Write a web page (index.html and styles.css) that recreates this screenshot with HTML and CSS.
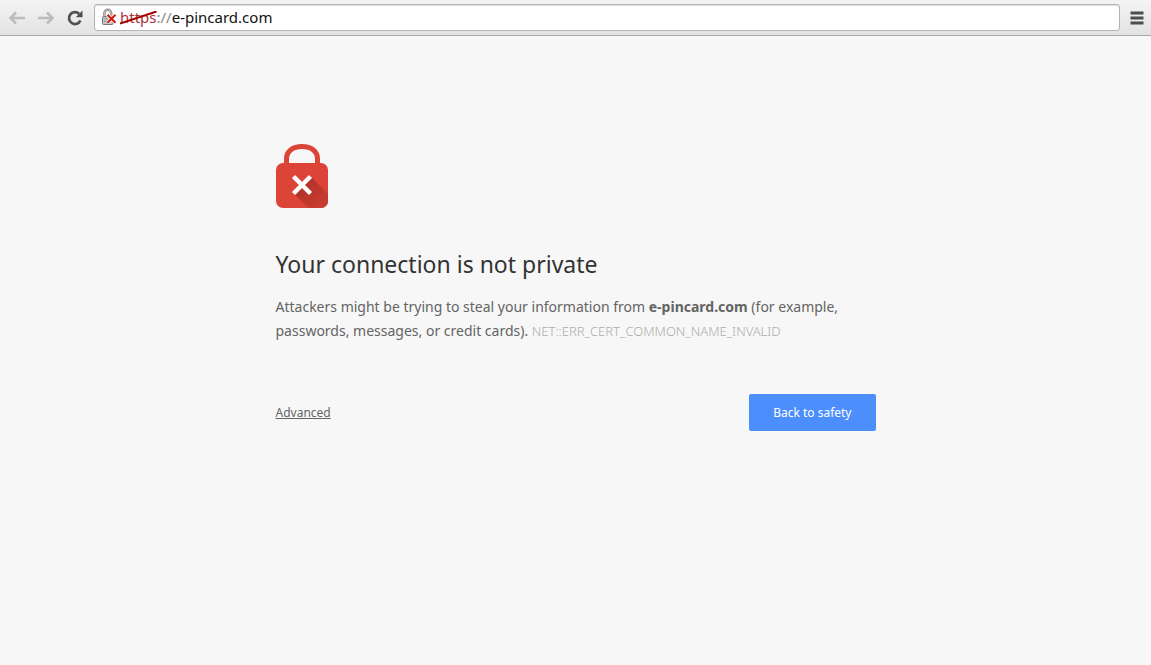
FILE: index.html
```
<!DOCTYPE html>
<html lang="en">
<head>
    <meta charset="UTF-8">
    <meta name="viewport" content="width=device-width, initial-scale=1.0">
    <title>Privacy error</title>
    <link rel="stylesheet" href="styles.css">
</head>
<body>
    <!-- Browser toolbar -->
    <header class="toolbar">
        <nav class="nav-buttons">
            <button class="icon-btn" type="button" aria-label="Back" disabled>
                <svg width="18" height="18" viewBox="0 0 18 18"><path d="M8 3.5L2.5 9L8 14.5M3 9H17" fill="none" stroke="#bcbcbc" stroke-width="2.6"/></svg>
            </button>
            <button class="icon-btn" type="button" aria-label="Forward" disabled>
                <svg width="18" height="18" viewBox="0 0 18 18"><path d="M10 3.5L15.5 9L10 14.5M15 9H1" fill="none" stroke="#bcbcbc" stroke-width="2.6"/></svg>
            </button>
            <button class="icon-btn" type="button" aria-label="Reload">
                <svg width="18" height="18" viewBox="0 0 18 18"><path d="M13.2 5A5.9 5.9 0 1 0 14.4 11.4" fill="none" stroke="#505050" stroke-width="2.7"/><path d="M16.5 1.5V8.2H9.8Z" fill="#505050"/></svg>
            </button>
        </nav>
        <form class="address-bar">
            <svg class="site-lock" width="16" height="18" viewBox="0 0 16 18">
                <path d="M3.4 9V5.2a3.4 3.4 0 0 1 6.8 0V9" fill="none" stroke="#858585" stroke-width="2.4"/>
                <path d="M3.4 9V5.2a3.4 3.4 0 0 1 6.8 0V9" fill="none" stroke="#d6d6d6" stroke-width="0.8"/>
                <rect x="1.5" y="8.5" width="10.5" height="8" rx="1" fill="#c4c4c4" stroke="#777"/>
                <path d="M3 11h7M3 13.5h7" stroke="#999"/>
                <path d="M6.5 6.7L14.5 14.7M14.5 6.7L6.5 14.7" stroke="#fff" stroke-width="3.4"/>
                <path d="M6.5 6.7L14.5 14.7M14.5 6.7L6.5 14.7" stroke="#d3180c" stroke-width="2"/>
            </svg>
            <label class="scheme" for="url">
                <span class="https">https<svg class="strike" viewBox="0 0 36 14" preserveAspectRatio="none"><path d="M0 12.5L36 0.5" stroke="#a80000" stroke-width="2"/></svg></span><span class="slashes">://</span>
            </label>
            <input class="url" id="url" type="text" value="e-pincard.com" spellcheck="false">
        </form>
        <button class="icon-btn menu-btn" type="button" aria-label="Menu">
            <svg width="14" height="14" viewBox="0 0 14 14"><path d="M0.5 2H13.5M0.5 7H13.5M0.5 12H13.5" stroke="#4d4d4d" stroke-width="3"/></svg>
        </button>
    </header>

    <main class="warning">
        <svg class="lock" width="52" height="64" viewBox="0 0 52 64">
            <defs>
                <linearGradient id="shadow" gradientUnits="userSpaceOnUse" x1="26" y1="42" x2="44" y2="60">
                    <stop offset="0" stop-color="#b23329"/>
                    <stop offset="1" stop-color="#c83c31"/>
                </linearGradient>
            </defs>
            <path d="M10.5 22V15C10.5 7 17 2.5 26 2.5S41.5 7 41.5 15V22" fill="none" stroke="#db4437" stroke-width="5"/>
            <rect y="19" width="52" height="45" rx="7" fill="#db4437"/>
            <path d="M35 33L52 50V57A7 7 0 0 1 45 64H33L17 49Z" fill="url(#shadow)"/>
            <path d="M17.5 32.5L34.5 49.5M34.5 32.5L17.5 49.5" stroke="#fff" stroke-width="4.4"/>
        </svg>
        <h1>Your connection is not private</h1>
        <p>Attackers might be trying to steal your information from <strong>e-pincard.com</strong> (for example, passwords, messages, or credit cards). <span class="error-code">NET::ERR_CERT_COMMON_NAME_INVALID</span></p>
        <div class="actions">
            <a class="advanced" href="#">Advanced</a>
            <button class="safety-btn" type="button">Back to safety</button>
        </div>
    </main>
</body>
</html>
```
FILE: styles.css
```
body {
    margin: 0;
    background: #f7f7f7;
    color: #646464;
    font-family: "Noto Sans", "Open Sans", sans-serif;
}

/* Toolbar */
.toolbar {
    display: flex;
    align-items: center;
    gap: 10px;
    height: 35px;
    padding: 0 7px 0 8px;
    background: linear-gradient(#f4f4f4, #e2e2e2);
    border-bottom: 1px solid #a9a9a9;
}

.nav-buttons {
    display: flex;
    gap: 11px;
}

.icon-btn {
    display: flex;
    padding: 0;
    border: none;
    background: none;
}

.address-bar {
    display: flex;
    flex: 1;
    align-items: center;
    box-sizing: border-box;
    height: 27px;
    padding: 0 6px 2px;
    background: #fff;
    border: 1px solid #b5b5b5;
    border-radius: 3px;
    box-shadow: inset 0 1px 1px #ddd;
    font-size: 15px;
}

.site-lock {
    margin-right: 3px;
}

.https {
    position: relative;
    color: #a33;
}

.strike {
    position: absolute;
    left: 0;
    top: 4px;
    width: 100%;
    height: 14px;
}

.slashes {
    color: #888;
}

.url {
    flex: 1;
    min-width: 0;
    padding: 0;
    border: none;
    outline: none;
    background: none;
    color: #111;
    font: inherit;
}

/* Warning page */
.warning {
    max-width: 600px;
    margin: 108px auto 0;
}

.lock {
    display: block;
}

h1 {
    margin: 39px 0 14px;
    color: #333;
    font-size: 23px;
    font-weight: 400;
    line-height: 34px;
}

p {
    margin: 0;
    font-size: 14px;
    line-height: 24px;
}

.error-code {
    color: #acacac;
    font-size: 13px;
    font-weight: 300;
}

.actions {
    display: flex;
    align-items: center;
    justify-content: space-between;
    margin-top: 51px;
}

.advanced {
    color: #646464;
    font-size: 12px;
}

.safety-btn {
    padding: 10px 24px;
    border: none;
    border-radius: 2px;
    background: #4c8efb;
    color: #fff;
    font-family: inherit;
    font-size: 12px;
    line-height: 17px;
    cursor: pointer;
}
```
